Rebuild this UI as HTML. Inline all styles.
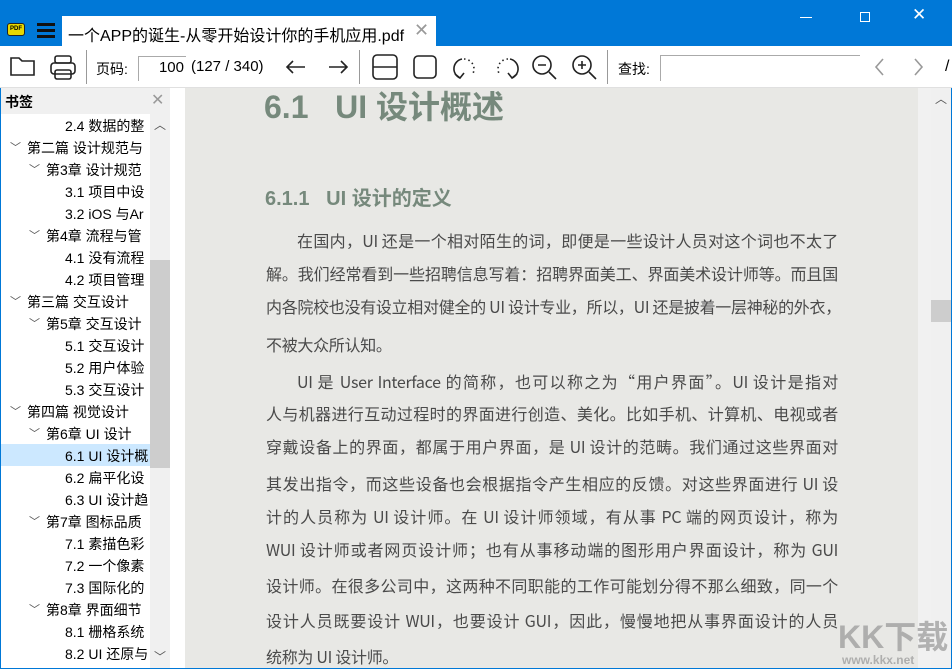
<!DOCTYPE html>
<html><head><meta charset="utf-8"><style>
*{margin:0;padding:0;box-sizing:border-box}
body{width:952px;height:669px;overflow:hidden;background:#fff;font-family:"Liberation Sans","Noto Sans CJK SC",sans-serif;position:relative}
.abs{position:absolute}
#title{left:0;top:0;width:952px;height:46px;background:#0078d7}
#tab{left:62px;top:16px;width:374px;height:30px;background:#fff;font-size:16px;color:#000;padding:6px 0 0 6px;white-space:nowrap}
#tb{left:0;top:46px;width:952px;height:42px;background:#fff;border-bottom:1px solid #e0e0e0}
.sep{position:absolute;top:50px;width:1px;height:34px;background:#999}
#side{left:0;top:88px;width:185px;height:581px;background:#fff;border-left:1px solid #0078d7}
#sh{left:1px;top:88px;width:169px;height:26px;background:#f0f0f0;font-size:14px;font-weight:bold;padding:4px 0 0 4px}
.row{position:absolute;left:1px;width:149px;height:22px;font-size:14px;line-height:22px;white-space:nowrap;overflow:hidden;color:#000}
.chev{position:absolute;font-size:11px;color:#555;top:0}
#page{left:185px;top:88px;width:733px;height:581px;background:#e8e8e5}
.t{position:absolute;left:266px;width:572px;font-size:16px;color:#4a4a4a;white-space:nowrap;text-align-last:justify;text-align:justify;font-family:"Noto Sans CJK SC",sans-serif;letter-spacing:-0.3px}
</style></head><body>
<div id="title" class="abs"></div>
<div class="abs" style="left:7px;top:23px;width:18px;height:13px;background:#e8d800;border:1.5px solid #222;border-radius:3px;font-size:6px;font-weight:bold;text-align:center;line-height:10px">PDF</div>
<div class="abs" style="left:37px;top:23px;width:18px;height:3px;background:#111;box-shadow:0 6px #111,0 12px #111"></div>
<div id="tab" class="abs">一个APP的诞生-从零开始设计你的手机应用.pdf<span style="position:absolute;left:352px;top:4px;color:#999;font-size:18px">✕</span></div>
<div class="abs" style="left:800px;top:17px;width:12px;height:1px;background:#fff"></div>
<div class="abs" style="left:860px;top:12px;width:10px;height:10px;border:1px solid #fff"></div>
<div class="abs" style="left:912px;top:5px;color:#fff;font-size:17px">✕</div>
<div id="tb" class="abs"></div>
<svg class="abs" style="left:0;top:46px" width="952" height="42" fill="none" stroke="#222" stroke-width="1.6">
<path d="M11 12h8l3 3h12v14H11z"/>
<rect x="55" y="10" width="16" height="7" rx="2"/><rect x="51" y="17" width="24" height="11" rx="3"/><rect x="55" y="24" width="16" height="9" rx="2"/>
<path d="M305 21h-18M293 15l-6 6 6 6M329 21h18M341 15l6 6-6 6"/>
<rect x="373" y="9" width="24" height="24" rx="4"/><path d="M373 21h24"/>
<rect x="414" y="10" width="22" height="22" rx="4"/>
<path d="M460 32a10 10 0 0 1 2-19"/><path d="M464 13a10 10 0 0 1 8 16" stroke-dasharray="1.5 3"/><path d="M455 28l5 4 4-5"/>
<path d="M512 32a10 10 0 0 0-2-19"/><path d="M508 13a10 10 0 0 0-8 16" stroke-dasharray="1.5 3"/><path d="M517 28l-5 4-4-5"/>
<circle cx="542" cy="19" r="9"/><path d="M549 26l7 7M538 19h8"/>
<circle cx="582" cy="19" r="9"/><path d="M589 26l7 7M578 19h8M582 15v8"/>
<path stroke="#999" d="M883 13l-7 8 7 8M915 13l7 8-7 8"/>
</svg>
<div class="sep" style="left:86px"></div><div class="sep" style="left:359px"></div><div class="sep" style="left:607px"></div>
<div class="abs" style="left:96px;top:59px;font-size:14px">页码:</div>
<div class="abs" style="left:138px;top:56px;width:48px;height:25px;border:1px solid #aaa;border-right:none;border-bottom:none;font-size:15px;text-align:right;padding:2px 2px 0 0">100</div>
<div class="abs" style="left:191px;top:58px;font-size:15px">(127 / 340)</div>
<div class="abs" style="left:618px;top:59px;font-size:14px">查找:</div>
<div class="abs" style="left:660px;top:55px;width:200px;height:26px;border:1px solid #aaa;border-right:none;border-bottom:none"></div>
<div class="abs" style="left:945px;top:58px;font-size:16px">/</div>
<div id="side" class="abs"></div>
<div id="sh" class="abs">书签<span style="position:absolute;left:150px;top:2px;color:#999;font-weight:normal;font-size:16px">✕</span></div>
<div class="abs" style="left:150px;top:114px;width:20px;height:555px;background:#f0f0f0"></div>
<div class="abs" style="left:150px;top:260px;width:20px;height:208px;background:#cdcdcd"></div>
<div class="abs" style="left:154px;top:116px;font-size:12px;color:#555">︿</div>
<div class="abs" style="left:154px;top:648px;font-size:12px;color:#555">﹀</div>
<div class="abs" style="left:1px;top:444px;width:149px;height:22px;background:#cce8ff"></div>
<div class="abs" style="left:170px;top:88px;width:15px;height:581px;background:#fff"></div>
<div id="rows"></div>
<div id="page" class="abs"></div>
<div class="abs" style="left:918px;top:88px;width:13px;height:581px;background:#f1f1f1"></div>
<div class="abs" style="left:931px;top:88px;width:20px;height:581px;background:#f0f0f0"></div>
<div class="abs" style="left:931px;top:300px;width:20px;height:22px;background:#cdcdcd"></div>
<div class="abs" style="left:935px;top:90px;font-size:12px;color:#555">︿</div>
<div class="abs" style="left:951px;top:88px;width:1px;height:581px;background:#0078d7"></div>
<div class="abs" style="left:0;top:668px;width:952px;height:1px;background:#0078d7"></div>
<div class="abs" style="left:264px;top:82px;font-size:32px;font-weight:bold;color:#76897c;font-family:'Liberation Sans','Noto Sans CJK SC',sans-serif">6.1 &nbsp; UI 设计概述</div>
<div class="abs" style="left:265px;top:182px;font-size:20px;font-weight:bold;color:#76897c;font-family:'Liberation Sans','Noto Sans CJK SC',sans-serif">6.1.1 &nbsp; UI 设计的定义</div>
<div class="t" style="top:228px;left:297px;width:541px">在国内，UI 还是一个相对陌生的词，即便是一些设计人员对这个词也不太了</div>
<div class="t" style="top:261px">解。我们经常看到一些招聘信息写着：招聘界面美工、界面美术设计师等。而且国</div>
<div class="t" style="top:294px">内各院校也没有设立相对健全的 UI 设计专业，所以，UI 还是披着一层神秘的外衣，</div>
<div class="t" style="top:332px;text-align-last:left">不被大众所认知。</div>
<div class="t" style="top:369px;left:297px;width:541px">UI 是 User Interface 的简称，也可以称之为“用户界面”。UI 设计是指对</div>
<div class="t" style="top:401px">人与机器进行互动过程时的界面进行创造、美化。比如手机、计算机、电视或者</div>
<div class="t" style="top:434px">穿戴设备上的界面，都属于用户界面，是 UI 设计的范畴。我们通过这些界面对</div>
<div class="t" style="top:471px">其发出指令，而这些设备也会根据指令产生相应的反馈。对这些界面进行 UI 设</div>
<div class="t" style="top:504px">计的人员称为 UI 设计师。在 UI 设计师领域，有从事 PC 端的网页设计，称为</div>
<div class="t" style="top:537px">WUI 设计师或者网页设计师；也有从事移动端的图形用户界面设计，称为 GUI</div>
<div class="t" style="top:573px">设计师。在很多公司中，这两种不同职能的工作可能划分得不那么细致，同一个</div>
<div class="t" style="top:608px">设计人员既要设计 WUI，也要设计 GUI，因此，慢慢地把从事界面设计的人员</div>
<div class="t" style="top:644px;text-align-last:left">统称为 UI 设计师。</div>
<div class="abs" style="left:838px;top:612px;font-size:32px;font-weight:bold;color:rgba(150,150,150,.7)">KK下载</div>
<div class="abs" style="left:842px;top:653px;font-size:12px;font-weight:bold;color:rgba(150,150,150,.7)">www.kkx.net</div>
<script>
var R=[[3,"2.4 数据的整"],[1,"第二篇 设计规范与"],[2,"第3章 设计规范"],[3,"3.1 项目中设"],[3,"3.2 iOS 与Ar"],[2,"第4章 流程与管"],[3,"4.1 没有流程"],[3,"4.2 项目管理"],[1,"第三篇 交互设计"],[2,"第5章 交互设计"],[3,"5.1 交互设计"],[3,"5.2 用户体验"],[3,"5.3 交互设计"],[1,"第四篇 视觉设计"],[2,"第6章 UI 设计"],[3,"6.1 UI 设计概"],[3,"6.2 扁平化设"],[3,"6.3 UI 设计趋"],[2,"第7章 图标品质"],[3,"7.1 素描色彩"],[3,"7.2 一个像素"],[3,"7.3 国际化的"],[2,"第8章 界面细节"],[3,"8.1 栅格系统"],[3,"8.2 UI 还原与"]];
var h="";R.forEach(function(r,i){var tx=[0,26,45,64][r[0]];var y=115+i*22;h+='<div class="row" style="top:'+y+'px">'+(r[0]<3?'<span class="chev" style="left:'+(tx-17)+'px">﹀</span>':'')+'<span style="position:absolute;left:'+tx+'px">'+r[1]+'</span></div>';});
document.getElementById("rows").innerHTML=h;
</script>
</body></html>
